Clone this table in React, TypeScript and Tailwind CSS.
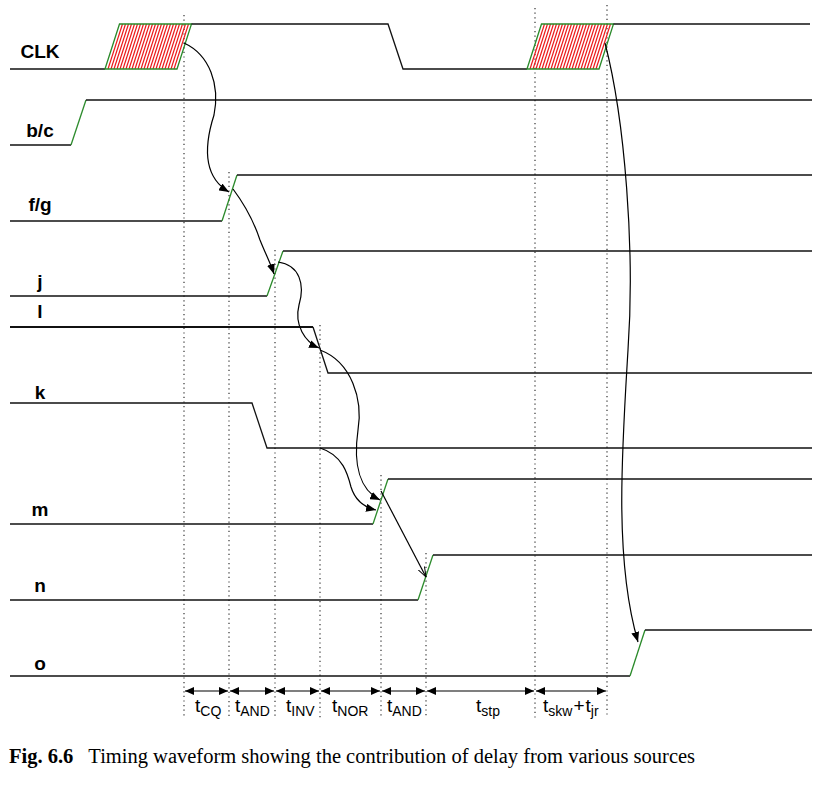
import React from "react";

const G = "#2a8a2a";
const K = "#111";

function Hatch({ bl, br, dx }: { bl: number; br: number; dx: number }) {
  const n = 24;
  const lines = [];
  for (let i = 1; i < n; i++) {
    const x = bl + (i * (br - bl)) / n;
    lines.push(<line key={i} x1={x} y1={69} x2={x + dx} y2={24} stroke="#ec1c1c" strokeWidth={1.2} />);
  }
  return (
    <g>
      {lines}
      <polygon points={`${bl},69 ${bl + dx},24 ${br + dx},24 ${br},69`} fill="none" stroke={G} strokeWidth={1.3} />
    </g>
  );
}

function Sig({ y, text }: { y: number; text: string }) {
  return (
    <text x={40} y={y} textAnchor="middle" fill="#000" className="font-['Liberation_Sans',Arial,sans-serif] font-bold text-[19px]">
      {text}
    </text>
  );
}

function TLabel({ x, sub, extra }: { x: number; sub: string; extra?: React.ReactNode }) {
  return (
    <text x={x} y={712} fill="#000" className="font-['Liberation_Sans',Arial,sans-serif] text-[19px]">
      <tspan>t</tspan>
      <tspan dy={4} className="text-[14px]">{sub}</tspan>
      {extra}
    </text>
  );
}

export default function App() {
  const dots = [
    [184, 15],
    [229, 172],
    [275, 250],
    [320, 325],
    [381, 475],
    [426, 553],
    [535, 8],
    [607, 5],
  ];
  const dims = [
    [184, 229],
    [229, 275],
    [275, 320],
    [320, 381],
    [381, 426],
    [426, 535],
    [535, 607],
  ];
  return (
    <div className="w-[836px] h-[786px] bg-white flex flex-col">
      <svg width={836} height={744} viewBox="0 0 836 744" className="block shrink-0">
        <defs>
          <marker id="ah" viewBox="0 0 10 8" refX="10" refY="4" markerWidth="10" markerHeight="8" markerUnits="userSpaceOnUse" orient="auto">
            <path d="M0,0 L10,4 L0,8 z" fill="#000" />
          </marker>
          <marker id="av" viewBox="0 0 10 8" refX="10" refY="4" markerWidth="10" markerHeight="8" markerUnits="userSpaceOnUse" orient="auto">
            <path d="M0,0.5 L10,4 L0,7.5" fill="none" stroke="#000" strokeWidth={1} />
          </marker>
          <marker id="dh" viewBox="0 0 9 8" refX="9" refY="4" markerWidth="9" markerHeight="8" markerUnits="userSpaceOnUse" orient="auto-start-reverse">
            <path d="M0,0 L9,4 L0,8 z" fill="#000" />
          </marker>
        </defs>

        {/* dotted guides */}
        {dots.map(([x, y0]) => (
          <line key={x} x1={x} y1={y0} x2={x} y2={718} stroke="#333" strokeWidth={1.2} strokeDasharray="1.2 3.4" />
        ))}

        {/* CLK */}
        <path d="M10,69 H105" stroke={K} strokeWidth={1.3} fill="none" />
        <Hatch bl={105} br={177} dx={14.5} />
        <path d="M191.5,24 H388 L403,69 H527" stroke={K} strokeWidth={1.3} fill="none" />
        <Hatch bl={527} br={599} dx={14.5} />
        <path d="M613.5,24 H810" stroke={K} strokeWidth={1.3} fill="none" />

        {/* b/c */}
        <path d="M10,145 H71" stroke={K} strokeWidth={1.3} fill="none" />
        <path d="M71,145 L86,100" stroke={G} strokeWidth={1.3} fill="none" />
        <path d="M86,100 H812" stroke={K} strokeWidth={1.3} fill="none" />

        {/* f/g */}
        <path d="M10,221 H222" stroke={K} strokeWidth={1.3} fill="none" />
        <path d="M222,221 L237,175" stroke={G} strokeWidth={1.3} fill="none" />
        <path d="M237,175 H812" stroke={K} strokeWidth={1.3} fill="none" />

        {/* j */}
        <path d="M10,296 H267" stroke={K} strokeWidth={1.3} fill="none" />
        <path d="M267,296 L283,251" stroke={G} strokeWidth={1.3} fill="none" />
        <path d="M283,251 H812" stroke={K} strokeWidth={1.3} fill="none" />

        {/* l */}
        <path d="M10,327 H313" stroke={K} strokeWidth={2} fill="none" />
        <path d="M313,327 L328,373 H812" stroke={K} strokeWidth={1.3} fill="none" />

        {/* k */}
        <path d="M10,403 H252 L267,448 H812" stroke={K} strokeWidth={1.3} fill="none" />

        {/* m */}
        <path d="M10,524 H373" stroke={K} strokeWidth={1.3} fill="none" />
        <path d="M373,524 L388,479" stroke={G} strokeWidth={1.3} fill="none" />
        <path d="M388,479 H812" stroke={K} strokeWidth={1.3} fill="none" />

        {/* n */}
        <path d="M10,600 H418" stroke={K} strokeWidth={1.3} fill="none" />
        <path d="M418,600 L433,555" stroke={G} strokeWidth={1.3} fill="none" />
        <path d="M433,555 H812" stroke={K} strokeWidth={1.3} fill="none" />

        {/* o */}
        <path d="M10,676 H630" stroke={K} strokeWidth={1.3} fill="none" />
        <path d="M630,676 L645,630" stroke={G} strokeWidth={1.3} fill="none" />
        <path d="M645,630 H812" stroke={K} strokeWidth={1.3} fill="none" />

        {/* causal arrows */}
        <g fill="none" stroke="#000" strokeWidth={1.2}>
          <path d="M184,43 C210,55 220,85 214,115 C206,140 200,175 229,192" markerEnd="url(#ah)" />
          <path d="M233,189 C245,205 255,225 260,240 C266,255 270,262 274,274" markerEnd="url(#ah)" />
          <path d="M278,262 C300,265 305,285 299,305 C294,325 305,342 319,348" markerEnd="url(#ah)" />
          <path d="M320,350 C352,362 363,400 358,430 C353,465 360,490 380,500" markerEnd="url(#ah)" />
          <path d="M320,448 C343,455 348,475 351,487 C355,500 363,507 376,510" markerEnd="url(#ah)" />
          <path d="M381,491 L426,577" markerEnd="url(#av)" />
          <path d="M605,43 C625,120 635,250 628,350 C622,450 614,560 638,642" markerEnd="url(#ah)" />
        </g>

        {/* dimension arrows */}
        {dims.map(([a, b]) => (
          <line key={a} x1={a + 1} y1={691} x2={b - 1} y2={691} stroke="#000" strokeWidth={1.2} markerStart="url(#dh)" markerEnd="url(#dh)" />
        ))}

        {/* signal labels */}
        <Sig y={58} text="CLK" />
        <Sig y={137} text="b/c" />
        <Sig y={211} text="f/g" />
        <Sig y={288} text="j" />
        <Sig y={318} text="l" />
        <Sig y={399} text="k" />
        <Sig y={516} text="m" />
        <Sig y={592} text="n" />
        <Sig y={670} text="o" />

        {/* timing labels */}
        <TLabel x={195} sub="CQ" />
        <TLabel x={235} sub="AND" />
        <TLabel x={286} sub="INV" />
        <TLabel x={332} sub="NOR" />
        <TLabel x={387} sub="AND" />
        <TLabel x={476} sub="stp" />
        <TLabel
          x={543}
          sub="skw"
          extra={
            <>
              <tspan dy={-4} dx={1}>+</tspan>
              <tspan dx={1}>t</tspan>
              <tspan dy={4} className="text-[14px]">jr</tspan>
            </>
          }
        />
      </svg>
      <p className="pl-[9px] text-[20.5px] leading-[24px] text-black font-['Liberation_Serif',serif] whitespace-nowrap">
        <span className="font-bold">Fig. 6.6</span>
        <span className="ml-[15px]">Timing waveform showing the contribution of delay from various sources</span>
      </p>
    </div>
  );
}
